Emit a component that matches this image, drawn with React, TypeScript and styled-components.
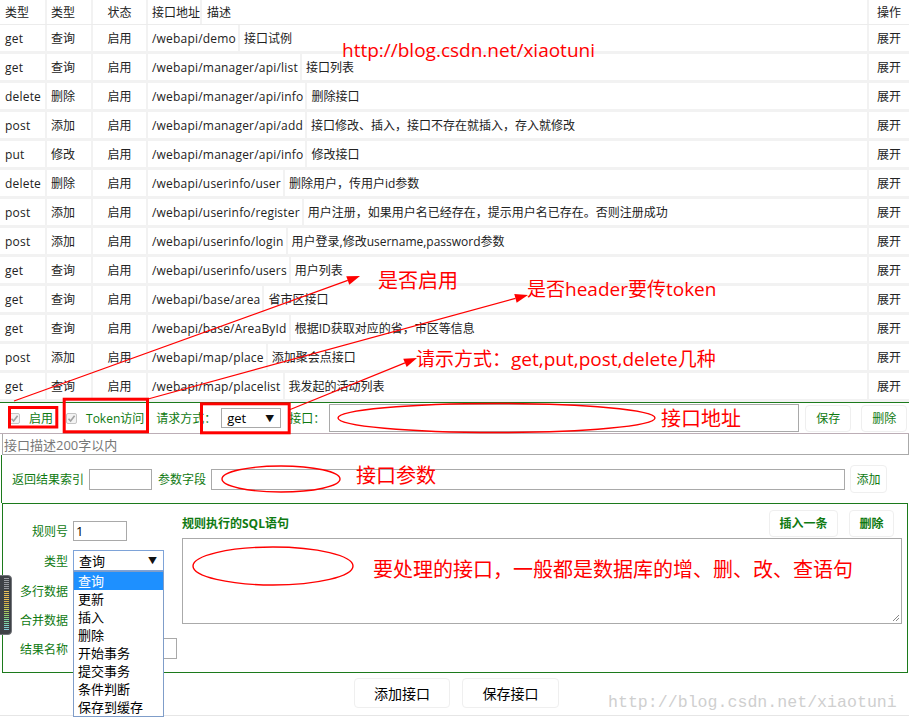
import React from 'react';
import styled, { createGlobalStyle } from 'styled-components';

const GlobalStyle = createGlobalStyle`
  html, body { margin: 0; padding: 0; background: #fff; }
  body {
    width: 909px; height: 721px; overflow: hidden;
    font-family: "Open Sans", "Noto Sans CJK SC", sans-serif;
    color: #222;
  }
  * { box-sizing: border-box; }
`;

const GREEN = '#0f7a12';
const GREEN_LINE = '#1c7a1c';

const Page = styled.div`
  position: relative;
  width: 909px;
  height: 721px;
  overflow: hidden;
  background: #fff;
`;

/* ---------- table ---------- */
const Table = styled.div`
  display: flex;
  flex-direction: column;
  background: #f2f2f2;
  padding-bottom: 3px;
`;

const HeadRow = styled.div`
  display: flex;
  height: 25px;
  background: #fff;
  border-bottom: 1px solid #ececec;
  font-size: 12px;
`;

const Body = styled.div`
  display: flex;
  flex-direction: column;
  gap: 3px;
`;

const Row = styled.div`
  display: flex;
  height: 26px;
  background: #fff;
  font-size: 12px;
  color: #222;
`;

const Cell = styled.div<{ $w?: number; $center?: boolean; $grow?: boolean; $first?: boolean; $pl?: number; $pr?: number; $latin?: boolean }>`
  display: flex;
  align-items: center;
  white-space: nowrap;
  ${(p) => (p.$w ? `width: ${p.$w}px; flex: none;` : '')}
  ${(p) => (p.$grow ? 'flex: 1;' : '')}
  ${(p) => (p.$latin ? 'letter-spacing: 0.2px;' : '')}
  justify-content: ${(p) => (p.$center ? 'center' : 'flex-start')};
  border-left: ${(p) => (p.$first ? 'none' : '2px solid #f2f2f2')};
  padding-left: ${(p) => (p.$center ? 0 : p.$pl ?? 4)}px;
  padding-right: ${(p) => p.$pr ?? 0}px;
`;

/* ---------- form top bar ---------- */
const TopBar = styled.div`
  display: flex;
  align-items: center;
  height: 32px;
  border-top: 1px solid ${GREEN_LINE};
  border-bottom: 1px solid #bcaeb6;
  font-size: 12px;
`;

const Spaced = styled.div<{ $ml: number }>`
  display: flex;
  align-items: center;
  flex: none;
  margin-left: ${(p) => p.$ml}px;
`;

const Check = styled.span`
  width: 11px;
  height: 11px;
  border: 1px solid #c4c4c4;
  background: #f3f3f3;
  border-radius: 2px;
  display: inline-flex;
  align-items: center;
  justify-content: center;
  margin-right: 9px;
`;

const GreenText = styled.span<{ $bold?: boolean; $size?: number }>`
  color: ${GREEN};
  font-size: ${(p) => p.$size ?? 12}px;
  font-weight: ${(p) => (p.$bold ? 700 : 400)};
  white-space: nowrap;
`;

const HeadTitle = styled(GreenText)`
  flex: 1;
`;

const SmallSelect = styled.div<{ $w: number; $h: number; $focus?: boolean }>`
  position: relative;
  width: ${(p) => p.$w}px;
  height: ${(p) => p.$h}px;
  border: 1px solid ${(p) => (p.$focus ? '#7ea3d8' : '#a9a9a9')};
  background: #fff;
  display: flex;
  align-items: center;
  justify-content: space-between;
  padding: 0 6px 0 5px;
  font-size: 13px;
  color: #000;
`;

const Caret = styled.span`
  font-size: 9px;
  color: #111;
`;

const TextInput = styled.div<{ $w: number; $h: number }>`
  width: ${(p) => p.$w}px;
  height: ${(p) => p.$h}px;
  border: 1px solid #a9a9a9;
  background: #fff;
  font-size: 13px;
  display: flex;
  align-items: center;
  padding-left: 2px;
  color: #000;
  flex: none;
`;

const Btn = styled.div<{ $w: number; $h: number; $bold?: boolean; $color?: string; $size?: number }>`
  width: ${(p) => p.$w}px;
  height: ${(p) => p.$h}px;
  border: 1px solid #efefef;
  border-radius: 4px;
  background: #fff;
  display: flex;
  align-items: center;
  justify-content: center;
  color: ${(p) => p.$color ?? GREEN};
  font-size: ${(p) => p.$size ?? 12}px;
  font-weight: ${(p) => (p.$bold ? 700 : 400)};
  flex: none;
`;

const DescBox = styled.div`
  margin-left: 2px;
  height: 21px;
  border: 1px solid #aaa;
  border-top: none;
  font-size: 13px;
  color: #777;
  display: flex;
  align-items: center;
  padding-left: 1px;
`;

const ParamSection = styled.div`
  display: flex;
  align-items: center;
  height: 48px;
  margin-left: 1px;
  border-left: 1px solid ${GREEN_LINE};
  font-size: 12px;
`;

/* ---------- rule section ---------- */
const RuleSection = styled.div`
  display: flex;
  height: 170px;
  margin-left: 2px;
  margin-right: 1px;
  border: 1px solid ${GREEN_LINE};
`;

const RuleForm = styled.div`
  display: grid;
  grid-template-columns: 65px 104px;
  grid-template-rows: 29px 31px 29px 29px 29px;
  column-gap: 5px;
  align-items: center;
  padding-top: 12px;
  align-content: start;
  flex: none;
`;

const RuleLabel = styled.span`
  color: ${GREEN};
  font-size: 12px;
  text-align: right;
  white-space: nowrap;
`;

const SelectWrap = styled.div`
  position: relative;
  width: 91px;
`;

const DropList = styled.div`
  position: absolute;
  top: 100%;
  left: 0;
  width: 91px;
  background: #fff;
  border: 1px solid #7f9dc9;
  z-index: 5;
  display: flex;
  flex-direction: column;
`;

const DropItem = styled.div<{ $active?: boolean }>`
  height: 18px;
  line-height: 18px;
  padding-left: 4px;
  font-size: 13px;
  color: ${(p) => (p.$active ? '#fff' : '#000')};
  background: ${(p) => (p.$active ? '#1e90ff' : '#fff')};
`;

const SqlCol = styled.div`
  flex: 1;
  margin-left: 5px;
  display: flex;
  flex-direction: column;
  padding-top: 5px;
  padding-right: 5px;
`;

const SqlHead = styled.div`
  display: flex;
  align-items: center;
  height: 28px;
  gap: 11px;
  padding-right: 8px;
  margin-bottom: 1px;
`;

const SqlArea = styled.div`
  position: relative;
  height: 86px;
  border: 1px solid #aaa;
  background: #fff;
`;

const Grip = styled.svg`
  position: absolute;
  right: 1px;
  bottom: 1px;
`;

/* ---------- footer ---------- */
const Footer = styled.div`
  display: flex;
  justify-content: center;
  gap: 12px;
  padding-left: 4px;
  padding-top: 5px;
  height: 43px;
  border-bottom: 1px solid #e6e6e6;
`;

/* ---------- overlays ---------- */
const Overlay = styled.svg`
  position: absolute;
  left: 0;
  top: 0;
  pointer-events: none;
  z-index: 10;
`;

const Note = styled.div<{ $x: number; $y: number; $size?: number }>`
  position: absolute;
  left: ${(p) => p.$x}px;
  top: ${(p) => p.$y}px;
  color: #ff0000;
  font-size: ${(p) => p.$size ?? 20}px;
  line-height: 24px;
  white-space: nowrap;
  z-index: 11;
  font-family: "Open Sans", "Noto Sans CJK SC", sans-serif;
`;

const Watermark = styled.div`
  position: absolute;
  left: 608px;
  top: 691px;
  font-family: "Liberation Mono", monospace;
  font-size: 16.6px;
  line-height: 24px;
  color: #cfcfcf;
  white-space: nowrap;
  z-index: 11;
`;

const Handle = styled.svg`
  position: absolute;
  left: 0;
  top: 575px;
  z-index: 12;
`;

const rows: [string, string, string, string][] = [
  ['get', '查询', '/webapi/demo', '接口试例'],
  ['get', '查询', '/webapi/manager/api/list', '接口列表'],
  ['delete', '删除', '/webapi/manager/api/info', '删除接口'],
  ['post', '添加', '/webapi/manager/api/add', '接口修改、插入，接口不存在就插入，存入就修改'],
  ['put', '修改', '/webapi/manager/api/info', '修改接口'],
  ['delete', '删除', '/webapi/userinfo/user', '删除用户，传用户id参数'],
  ['post', '添加', '/webapi/userinfo/register', '用户注册，如果用户名已经存在，提示用户名已存在。否则注册成功'],
  ['post', '添加', '/webapi/userinfo/login', '用户登录,修改username,password参数'],
  ['get', '查询', '/webapi/userinfo/users', '用户列表'],
  ['get', '查询', '/webapi/base/area', '省市区接口'],
  ['get', '查询', '/webapi/base/AreaById', '根据ID获取对应的省，市区等信息'],
  ['post', '添加', '/webapi/map/place', '添加聚会点接口'],
  ['get', '查询', '/webapi/map/placelist', '我发起的活动列表'],
];

const dropItems = ['查询', '更新', '插入', '删除', '开始事务', '提交事务', '条件判断', '保存到缓存'];

const handleColors = ['#e8c15a', '#e8c15a', '#d9b04a', '#c9c957', '#a8c860', '#8ccf78', '#7fd2a0', '#7fcfc8', '#86c9d8'];

const CheckMark = () => (
  <svg width="9" height="9" viewBox="0 0 9 9">
    <path d="M1.5 4.8 L3.6 7 L7.6 1.8" fill="none" stroke="#a0a0a0" strokeWidth="1.6" />
  </svg>
);

function Arrow({ x1, y1, x2, y2 }: { x1: number; y1: number; x2: number; y2: number }) {
  const ang = Math.atan2(y2 - y1, x2 - x1);
  const len = 13;
  const half = 4.5;
  const bx = x2 - len * Math.cos(ang);
  const by = y2 - len * Math.sin(ang);
  const px = -Math.sin(ang) * half;
  const py = Math.cos(ang) * half;
  return (
    <g>
      <line x1={x1} y1={y1} x2={bx} y2={by} stroke="#ff0000" strokeWidth={1.2} />
      <polygon points={`${x2},${y2} ${bx + px},${by + py} ${bx - px},${by - py}`} fill="#ff0000" />
    </g>
  );
}

export default function App() {
  return (
    <Page>
      <GlobalStyle />
      <Table>
        <HeadRow>
          <Cell $w={45} $first $pl={5}>类型</Cell>
          <Cell $w={46}>类型</Cell>
          <Cell $w={55} $center>状态</Cell>
          <Cell $pr={0}>接口地址</Cell>
          <Cell $grow $pl={5}>描述</Cell>
          <Cell $w={42} $center>操作</Cell>
        </HeadRow>
        <Body>
          {rows.map((r, i) => (
            <Row key={i}>
              <Cell $w={45} $first $pl={5} $latin>{r[0]}</Cell>
              <Cell $w={46}>{r[1]}</Cell>
              <Cell $w={55} $center>启用</Cell>
              <Cell $pr={2} $latin>{r[2]}</Cell>
              <Cell $grow>{r[3]}</Cell>
              <Cell $w={42} $center>展开</Cell>
            </Row>
          ))}
        </Body>
      </Table>

      <TopBar>
        <Spaced $ml={9}>
          <Check><CheckMark /></Check>
          <GreenText>启用</GreenText>
        </Spaced>
        <Spaced $ml={13}>
          <Check><CheckMark /></Check>
          <GreenText>Token访问</GreenText>
        </Spaced>
        <Spaced $ml={12}>
          <GreenText>请求方式：</GreenText>
        </Spaced>
        <Spaced $ml={5}>
          <SmallSelect $w={60} $h={20}>
            <span>get</span>
            <Caret>▼</Caret>
          </SmallSelect>
        </Spaced>
        <Spaced $ml={8}>
          <GreenText>接口：</GreenText>
        </Spaced>
        <Spaced $ml={4}>
          <TextInput $w={470} $h={28} />
        </Spaced>
        <Spaced $ml={6}>
          <Btn $w={46} $h={27}>保存</Btn>
        </Spaced>
        <Spaced $ml={10}>
          <Btn $w={46} $h={27}>删除</Btn>
        </Spaced>
      </TopBar>

      <DescBox>接口描述200字以内</DescBox>

      <ParamSection>
        <Spaced $ml={10}>
          <GreenText>返回结果索引</GreenText>
        </Spaced>
        <Spaced $ml={5}>
          <TextInput $w={63} $h={21} />
        </Spaced>
        <Spaced $ml={6}>
          <GreenText>参数字段</GreenText>
        </Spaced>
        <Spaced $ml={5}>
          <TextInput $w={634} $h={21} />
        </Spaced>
        <Spaced $ml={5}>
          <Btn $w={37} $h={28}>添加</Btn>
        </Spaced>
      </ParamSection>

      <RuleSection>
        <RuleForm>
          <RuleLabel>规则号</RuleLabel>
          <TextInput $w={54} $h={20}>1</TextInput>
          <RuleLabel>类型</RuleLabel>
          <SelectWrap>
            <SmallSelect $w={91} $h={21} $focus>
              <span>查询</span>
              <Caret>▼</Caret>
            </SmallSelect>
            <DropList>
              {dropItems.map((d, i) => (
                <DropItem key={d} $active={i === 0}>{d}</DropItem>
              ))}
            </DropList>
          </SelectWrap>
          <RuleLabel>多行数据</RuleLabel>
          <span />
          <RuleLabel>合并数据</RuleLabel>
          <span />
          <RuleLabel>结果名称</RuleLabel>
          <TextInput $w={104} $h={21} />
        </RuleForm>
        <SqlCol>
          <SqlHead>
            <HeadTitle $bold>规则执行的SQL语句</HeadTitle>
            <Btn $w={69} $h={27} $bold>插入一条</Btn>
            <Btn $w={45} $h={27} $bold>删除</Btn>
          </SqlHead>
          <SqlArea>
            <Grip width="9" height="9" viewBox="0 0 9 9">
              <path d="M8 2 L2 8 M8 5 L5 8" stroke="#888" strokeWidth="1" />
            </Grip>
          </SqlArea>
        </SqlCol>
      </RuleSection>

      <Footer>
        <Btn $w={96} $h={30} $color="#000" $size={14}>添加接口</Btn>
        <Btn $w={97} $h={30} $color="#000" $size={14}>保存接口</Btn>
      </Footer>

      <Watermark>http://blog.csdn.net/xiaotuni</Watermark>

      <Handle width="12" height="60" viewBox="0 0 12 60">
        <rect x="-5" y="0.5" width="16.5" height="59" rx="3.5" fill="#3f4247" stroke="#72757a" />
        {[3, 5, 7, 9, 11, 13].map((y) => (
          <rect key={y} x="4" y={y} width="5" height="1" fill="#9a9ca0" />
        ))}
        {Array.from({ length: 20 }).map((_, i) => (
          <rect key={i} x="4" y={16 + i * 2} width="5" height="1" fill={handleColors[Math.floor(i / 2.3)]} />
        ))}
      </Handle>

      <Overlay width="909" height="721" viewBox="0 0 909 721">
        <g fill="none" stroke="#ff0000">
          <rect x="9.5" y="407.5" width="47.3" height="19.5" strokeWidth="3" />
          <rect x="64.2" y="399.2" width="83.3" height="32.6" strokeWidth="3" />
          <rect x="201.5" y="403.8" width="87.7" height="29" strokeWidth="3" />
          <ellipse cx="496.5" cy="418" rx="158.5" ry="14.5" strokeWidth="1.4" />
          <ellipse cx="281" cy="479" rx="59" ry="13" strokeWidth="1.4" />
          <ellipse cx="273" cy="566" rx="80" ry="19" strokeWidth="1.4" />
        </g>
        <Arrow x1={14} y1={401} x2={360} y2={276} />
        <Arrow x1={148} y1={399} x2={528} y2={295} />
        <Arrow x1={289} y1={410} x2={417} y2={358} />
      </Overlay>

      <Note $x={342} $y={38} $size={19}>http://blog.csdn.net/xiaotuni</Note>
      <Note $x={378} $y={269}>是否启用</Note>
      <Note $x={527} $y={277} $size={19}>是否header要传token</Note>
      <Note $x={416} $y={347} $size={19}>请示方式：get,put,post,delete几种</Note>
      <Note $x={661} $y={407}>接口地址</Note>
      <Note $x={356} $y={464}>接口参数</Note>
      <Note $x={373} $y={558}>要处理的接口，一般都是数据库的增、删、改、查语句</Note>
    </Page>
  );
}
